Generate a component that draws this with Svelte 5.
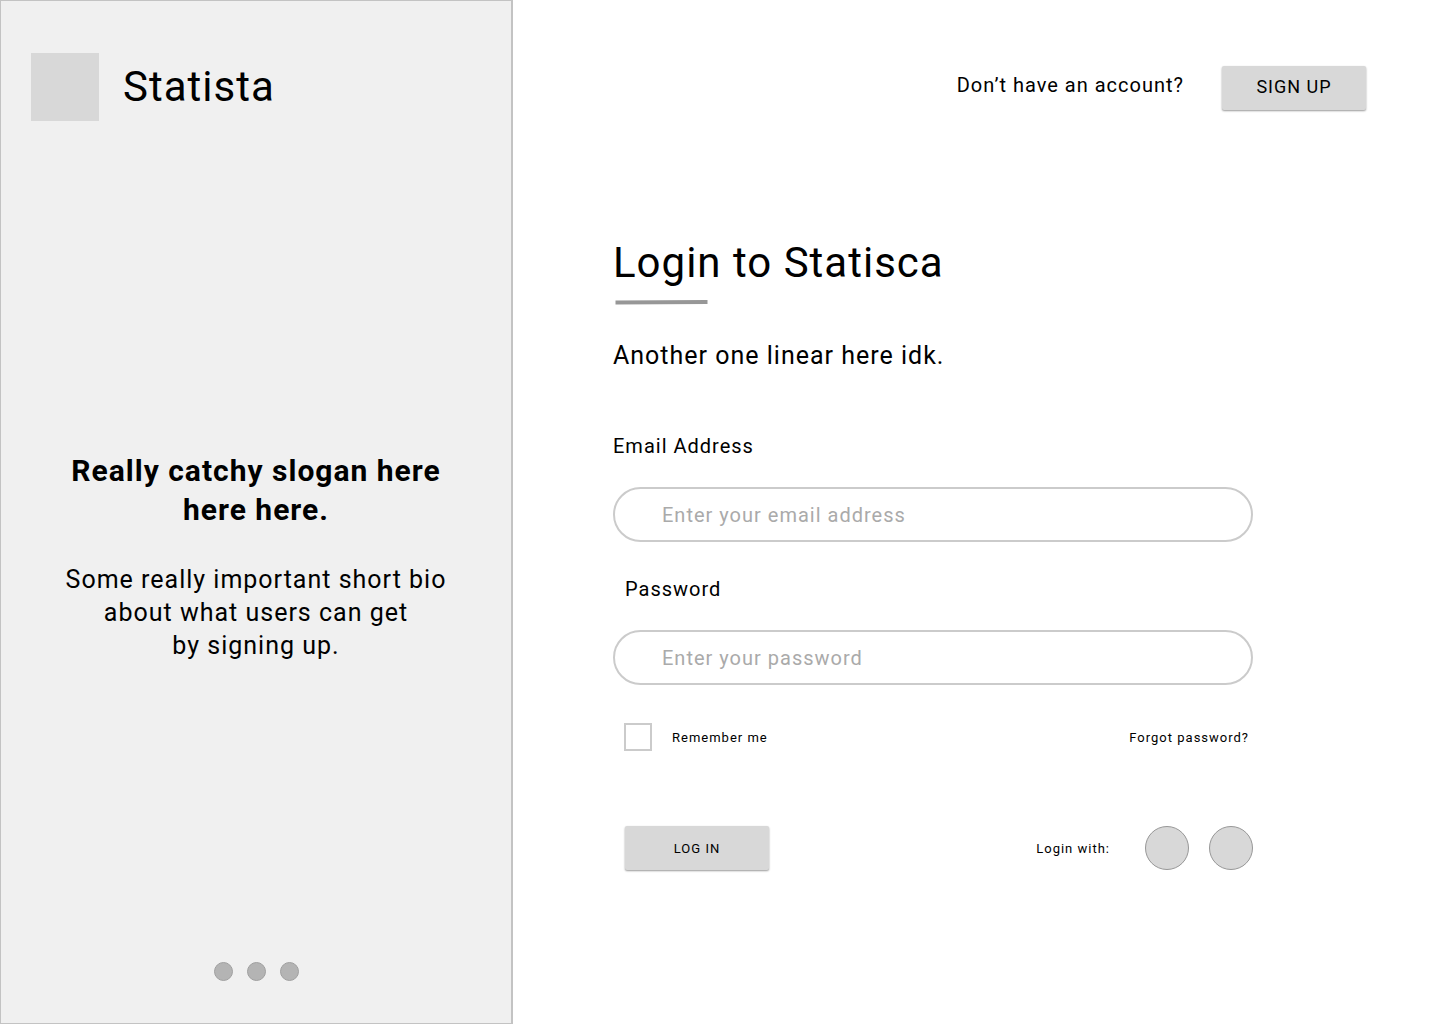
<script>
  let email = $state('');
  let password = $state('');
  let remember = $state(false);
  const slides = ['First slide', 'Second slide', 'Third slide'];
  const providers = ['first provider', 'second provider'];
</script>

<div class="page">
  <aside>
    <div class="brand">
      <div class="logo"></div>
      <span class="name">Statista</span>
    </div>
    <div class="pitch">
      <h2>Really catchy slogan here<br />here here.</h2>
      <p>Some really important short bio<br />about what users can get<br />by signing up.</p>
    </div>
    <div class="dots">
      {#each slides as slide}
        <button class="dot" type="button" aria-label={slide}></button>
      {/each}
    </div>
  </aside>

  <main>
    <header>
      <span class="ask">Don’t have an account?</span>
      <button class="btn signup" type="button">SIGN UP</button>
    </header>

    <form onsubmit={(e) => e.preventDefault()}>
      <h1>Login to Statisca</h1>
      <svg class="rule" width="94" height="6" viewBox="0 0 94 6" aria-hidden="true">
        <path d="M.5 3.5L92.500 3" stroke="#979797" stroke-width="4" />
      </svg>
      <p class="sub">Another one linear here idk.</p>

      <label class="label" for="email">Email Address</label>
      <input class="field" id="email" type="email" placeholder="Enter your email address" bind:value={email} />

      <label class="label inset" for="password">Password</label>
      <input class="field" id="password" type="password" placeholder="Enter your password" bind:value={password} />

      <div class="row options">
        <label class="remember"><input type="checkbox" bind:checked={remember} />Remember me</label>
        <a href="#forgot">Forgot password?</a>
      </div>

      <div class="row actions">
        <button class="btn login" type="submit">LOG IN</button>
        <div class="social">
          <span>Login with:</span>
          {#each providers as provider}
            <button class="circle" type="button" aria-label={`Login with ${provider}`}></button>
          {/each}
        </div>
      </div>
    </form>
  </main>
</div>

<style>
  :global(body) {
    background: #fff;
  }
  .page {
    display: grid;
    grid-template-columns: 513fr 927fr;
    min-height: 100vh;
    color: #000;
    font-family: Roboto, sans-serif;
    letter-spacing: 1px;
  }
  .page *,
  .page {
    box-sizing: border-box;
  }
  button,
  input {
    font-family: inherit;
    color: inherit;
    letter-spacing: inherit;
  }
  h1,
  h2,
  p {
    margin: 0;
    font-weight: 400;
  }
  aside {
    display: flex;
    flex-direction: column;
    justify-content: space-between;
    padding: 52px 30px 42px;
    background: #f0f0f0;
    border: 1px solid #c3c3c3;
    border-right-width: 2px;
  }
  .brand {
    display: flex;
    align-items: center;
    gap: 24px;
  }
  .logo {
    width: 68px;
    height: 68px;
    background: #d8d8d8;
  }
  .name,
  h1 {
    font-size: 42px;
    line-height: 50px;
  }
  .pitch {
    padding-top: 30px;
    text-align: center;
  }
  h2 {
    font-size: 30px;
    line-height: 39px;
    font-weight: 700;
  }
  .pitch p {
    margin-top: 34px;
    font-size: 25px;
    line-height: 33px;
  }
  .dots {
    display: flex;
    justify-content: center;
    gap: 14px;
  }
  .dot {
    width: 19px;
    height: 19px;
    padding: 0;
    border: 1px solid #a0a0a0;
    border-radius: 50%;
    background: #b4b4b4;
  }
  main {
    padding: 66px 74px 66px 100px;
  }
  header {
    display: flex;
    justify-content: flex-end;
    align-items: flex-start;
    gap: 38px;
  }
  .ask {
    font-size: 20px;
    line-height: 38px;
  }
  .btn {
    width: 144px;
    height: 44px;
    padding: 0;
    border: 0;
    border-radius: 2px;
    background: #d8d8d8;
    box-shadow: 0 1px 2px rgba(0, 0, 0, 0.4);
  }
  .signup {
    padding-bottom: 3px;
    font-size: 18px;
  }
  .login {
    margin-left: 12px;
    font-size: 13px;
  }
  form {
    display: flex;
    flex-direction: column;
    max-width: 640px;
    margin-top: 128px;
  }
  .rule {
    margin: 11px 0 0 2px;
  }
  .sub {
    margin-top: 34px;
    font-size: 25px;
    line-height: 33px;
  }
  .label {
    margin-top: 60px;
    font-size: 20px;
    line-height: 28px;
  }
  .inset {
    margin-top: 33px;
    padding-left: 12px;
  }
  .field {
    height: 55px;
    margin-top: 27px;
    padding: 0 47px;
    border: 2px solid #cbcbcb;
    border-radius: 28px;
    background: #fff;
    font-size: 20px;
  }
  .field::placeholder {
    color: #aaa;
    opacity: 1;
  }
  .row {
    display: flex;
    align-items: center;
    justify-content: space-between;
    font-size: 13px;
  }
  .options {
    margin-top: 38px;
    padding: 0 4px 0 11px;
  }
  .remember {
    display: flex;
    align-items: center;
    gap: 20px;
  }
  .remember input {
    appearance: none;
    width: 28px;
    height: 28px;
    margin: 0;
    border: 2px solid #cbcbcb;
    background: #fff;
  }
  .remember input:checked {
    background: #979797;
  }
  a {
    color: inherit;
    text-decoration: none;
  }
  .actions {
    margin-top: 75px;
  }
  .social {
    display: flex;
    align-items: center;
    gap: 20px;
  }
  .social span {
    margin-right: 15px;
  }
  .circle {
    width: 44px;
    height: 44px;
    padding: 0;
    border: 1px solid #979797;
    border-radius: 50%;
    background: #d8d8d8;
  }
</style>
